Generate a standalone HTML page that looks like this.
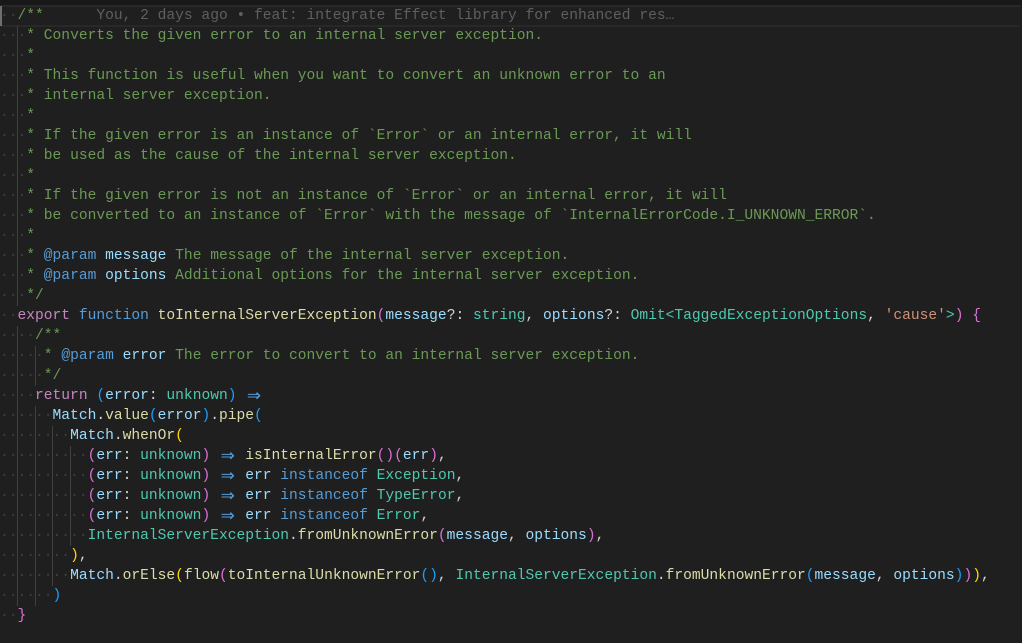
<!DOCTYPE html>
<html><head><meta charset="utf-8"><style>
html,body{margin:0;padding:0;background:#1f1f1f;width:1022px;height:643px;overflow:hidden}
#top{position:absolute;left:0;top:0;width:1022px;height:5px;background:#181818}
#cur{position:absolute;left:0;top:5px;width:1020px;height:18px;border-top:2px solid #282828;border-bottom:2px solid #282828}
#bar{position:absolute;left:0;top:6px;width:2px;height:20px;background:#6e6e6e}
.code{position:absolute;left:0;top:6px;font-family:"Liberation Mono","DejaVu Sans Mono",monospace;font-size:14.6px;line-height:20px;color:#d4d4d4}
.l{height:20px;white-space:pre}
.d{color:#3e3e3e}
.c{color:#6A9955}.k{color:#C586C0}.b{color:#569CD6}.f{color:#DCDCAA}.v{color:#9CDCFE}.t{color:#4EC9B0}.s{color:#CE9178}
.g{color:#FFD700}.p{color:#DA70D6}.u{color:#179FFF}.bl{color:#5f5f5f}
.ar{display:inline-block;width:17.5px;text-align:center;color:#569CD6;font-family:"DejaVu Sans",sans-serif;font-size:17px;line-height:20px;vertical-align:top}
.gd{position:absolute;width:1px;background:#404040}
</style></head><body>
<div id="top"></div><div id="cur"></div>
<div class="gd" style="left:17px;top:26px;height:280px"></div>
<div class="gd" style="left:17px;top:326px;height:280px"></div>
<div class="gd" style="left:35px;top:346px;height:40px"></div>
<div class="gd" style="left:35px;top:406px;height:200px"></div>
<div class="gd" style="left:52px;top:426px;height:160px"></div>
<div class="gd" style="left:70px;top:446px;height:100px"></div>
<div id="bar"></div>
<div class="code"><div class="l"><span class="d">··</span><span class="c">/**</span>      <span class="bl">You, 2 days ago • feat: integrate Effect library for enhanced res…</span></div><div class="l"><span class="d">···</span><span class="c">* Converts the given error to an internal server exception.</span></div><div class="l"><span class="d">···</span><span class="c">*</span></div><div class="l"><span class="d">···</span><span class="c">* This function is useful when you want to convert an unknown error to an</span></div><div class="l"><span class="d">···</span><span class="c">* internal server exception.</span></div><div class="l"><span class="d">···</span><span class="c">*</span></div><div class="l"><span class="d">···</span><span class="c">* If the given error is an instance of `Error` or an internal error, it will</span></div><div class="l"><span class="d">···</span><span class="c">* be used as the cause of the internal server exception.</span></div><div class="l"><span class="d">···</span><span class="c">*</span></div><div class="l"><span class="d">···</span><span class="c">* If the given error is not an instance of `Error` or an internal error, it will</span></div><div class="l"><span class="d">···</span><span class="c">* be converted to an instance of `Error` with the message of `InternalErrorCode.I_UNKNOWN_ERROR`.</span></div><div class="l"><span class="d">···</span><span class="c">*</span></div><div class="l"><span class="d">···</span><span class="c">* </span><span class="b">@param</span> <span class="v">message</span><span class="c"> The message of the internal server exception.</span></div><div class="l"><span class="d">···</span><span class="c">* </span><span class="b">@param</span> <span class="v">options</span><span class="c"> Additional options for the internal server exception.</span></div><div class="l"><span class="d">···</span><span class="c">*/</span></div><div class="l"><span class="d">··</span><span class="k">export</span> <span class="b">function</span> <span class="f">toInternalServerException</span><span class="p">(</span><span class="v">message</span>?: <span class="t">string</span>, <span class="v">options</span>?: <span class="t">Omit</span><span class="t">&lt;TaggedExceptionOptions</span>, <span class="s">'cause'</span><span class="t">&gt;</span><span class="p">)</span> <span class="p">{</span></div><div class="l"><span class="d">····</span><span class="c">/**</span></div><div class="l"><span class="d">·····</span><span class="c">* </span><span class="b">@param</span> <span class="v">error</span><span class="c"> The error to convert to an internal server exception.</span></div><div class="l"><span class="d">·····</span><span class="c">*/</span></div><div class="l"><span class="d">····</span><span class="k">return</span> <span class="u">(</span><span class="v">error</span>: <span class="t">unknown</span><span class="u">)</span> <span class="ar">⇒</span></div><div class="l"><span class="d">······</span><span class="v">Match</span>.<span class="f">value</span><span class="u">(</span><span class="v">error</span><span class="u">)</span>.<span class="f">pipe</span><span class="u">(</span></div><div class="l"><span class="d">········</span><span class="v">Match</span>.<span class="f">whenOr</span><span class="g">(</span></div><div class="l"><span class="d">··········</span><span class="p">(</span><span class="v">err</span>: <span class="t">unknown</span><span class="p">)</span> <span class="ar">⇒</span> <span class="f">isInternalError</span><span class="p">()(</span><span class="v">err</span><span class="p">)</span>,</div><div class="l"><span class="d">··········</span><span class="p">(</span><span class="v">err</span>: <span class="t">unknown</span><span class="p">)</span> <span class="ar">⇒</span> <span class="v">err</span> <span class="b">instanceof</span> <span class="t">Exception</span>,</div><div class="l"><span class="d">··········</span><span class="p">(</span><span class="v">err</span>: <span class="t">unknown</span><span class="p">)</span> <span class="ar">⇒</span> <span class="v">err</span> <span class="b">instanceof</span> <span class="t">TypeError</span>,</div><div class="l"><span class="d">··········</span><span class="p">(</span><span class="v">err</span>: <span class="t">unknown</span><span class="p">)</span> <span class="ar">⇒</span> <span class="v">err</span> <span class="b">instanceof</span> <span class="t">Error</span>,</div><div class="l"><span class="d">··········</span><span class="t">InternalServerException</span>.<span class="f">fromUnknownError</span><span class="p">(</span><span class="v">message</span>, <span class="v">options</span><span class="p">)</span>,</div><div class="l"><span class="d">········</span><span class="g">)</span>,</div><div class="l"><span class="d">········</span><span class="v">Match</span>.<span class="f">orElse</span><span class="g">(</span><span class="f">flow</span><span class="p">(</span><span class="f">toInternalUnknownError</span><span class="u">()</span>, <span class="t">InternalServerException</span>.<span class="f">fromUnknownError</span><span class="u">(</span><span class="v">message</span>, <span class="v">options</span><span class="u">)</span><span class="p">)</span><span class="g">)</span>,</div><div class="l"><span class="d">······</span><span class="u">)</span></div><div class="l"><span class="d">··</span><span class="p">}</span></div></div>
</body></html>
